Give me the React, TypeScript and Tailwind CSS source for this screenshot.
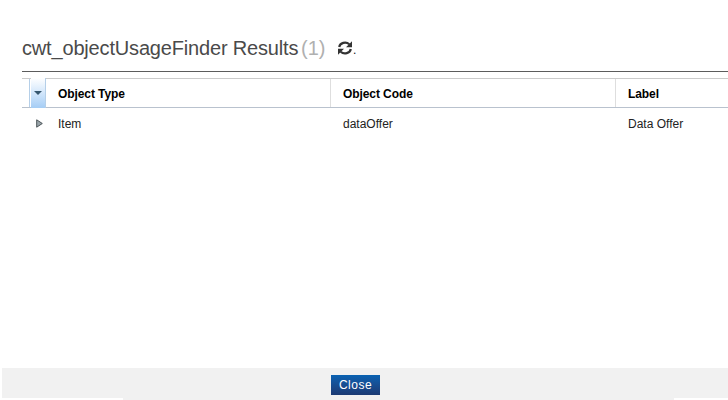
const columns = ["Object Type", "Object Code", "Label"];
const row = ["Item", "dataOffer", "Data Offer"];

function RefreshIcon() {
  return (
    <svg viewBox="0 0 14 14" className="h-[14px] w-[14px]" fill="none">
      <path d="M1.2 6A5.9 5.2 0 0 1 11.3 3.2" stroke="#333" strokeWidth="2.2" />
      <path d="M14 .3V6.2H8z" fill="#333" />
      <path d="M12.8 8A5.9 5.2 0 0 1 2.7 10.8" stroke="#333" strokeWidth="2.2" />
      <path d="M0 13.7V7.8H6z" fill="#333" />
    </svg>
  );
}

export default function App() {
  return (
    <div className="flex h-[400px] w-[728px] flex-col overflow-hidden bg-white font-['Liberation_Sans',Arial,sans-serif] text-xs text-[#222]">
      <header className="ml-[22px] flex h-[72px] shrink-0 border-b border-[#5c5c5c] pt-9">
        <h1 className="w-[279px] whitespace-nowrap text-[20px] leading-6 tracking-[-0.17px] text-[#4a4a4a]">
          cwt_objectUsageFinder Results
        </h1>
        <span className="w-[37px] text-[20px] leading-6 text-[#b0b0b0]">(1)</span>
        <div className="flex pt-[5px]">
          <RefreshIcon />
          <span className="ml-px text-[12px] leading-[18px]">.</span>
        </div>
      </header>

      <main className="ml-[22px] flex-1 pt-[6px]">
        <div className="flex h-[30px] border-y border-t-[#cbcbcb] border-b-[#b9c2ce]">
          <div className="w-2 shrink-0 border-r border-[#b5cfe8]" />
          <div className="-my-px ml-px flex w-[15px] shrink-0 justify-center border-r border-[#b5cfe8] bg-linear-to-b from-white to-[#a5cdf5] pt-[13px]">
            <svg width="8" height="4" viewBox="0 0 8 4" fill="#35576f">
              <path d="M0 0h8L4 4z" />
            </svg>
          </div>
          {columns.map((name) => (
            <div
              key={name}
              className="w-[285px] shrink-0 border-r border-[#dedede] pl-3 leading-[30px] tracking-[-0.08px] font-bold text-black"
            >
              {name}
            </div>
          ))}
        </div>
        <div className="flex h-8">
          <div className="w-6 shrink-0 pt-[11px] pl-[14px]">
            <svg width="7" height="9" viewBox="0 0 7 9">
              <path d="M.7.8v7.4L6.3 4.5z" fill="#9aa5aa" stroke="#4d5559" strokeWidth="1" />
            </svg>
          </div>
          {row.map((value) => (
            <div key={value} className="w-[285px] shrink-0 pl-3 leading-8">
              {value}
            </div>
          ))}
        </div>
      </main>

      <footer className="shrink-0">
        <div className="ml-[2px] flex h-[30px] bg-[#f1f1f1] pt-[7px] pl-[329px]">
          <button className="h-5 w-[49px] bg-linear-to-b from-[#0862b2] to-[#1b3a73] text-xs leading-5 tracking-[0.5px] text-white">
            Close
          </button>
        </div>
        <div className="ml-[123px] h-[2px] w-[551px] bg-[#f1f1f1]" />
      </footer>
    </div>
  );
}
